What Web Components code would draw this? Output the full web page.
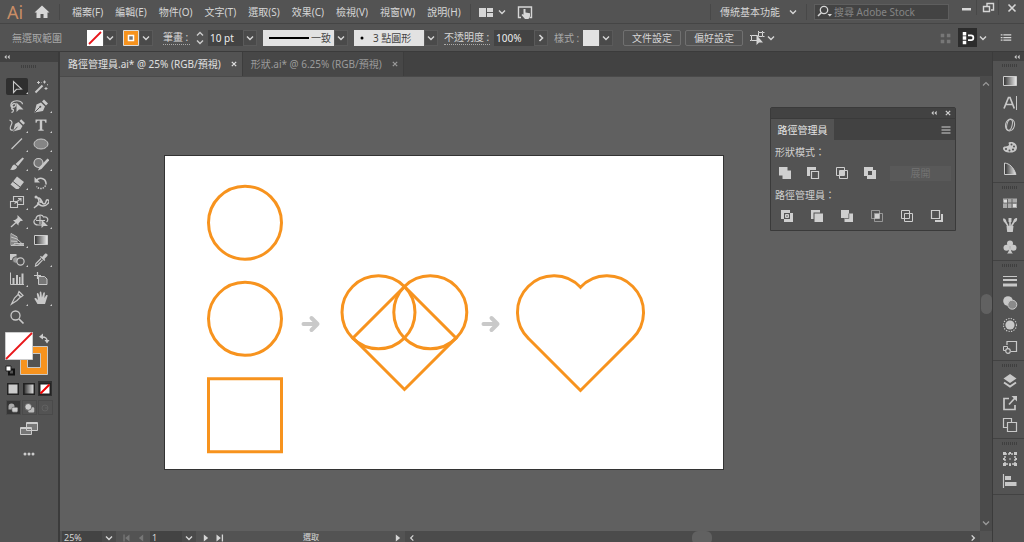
<!DOCTYPE html>
<html lang="zh-Hant">
<head>
<meta charset="utf-8">
<title>路徑管理員.ai</title>
<style>
html,body{margin:0;height:100%;overflow:hidden}
body{font:10px/14px "Noto Sans","Noto Sans CJK TC",sans-serif;color:#d6d6d6;background:#535353;
--bar:#535353;--dark:#424242;--line:#3b3b3b;--canvas:#606060;--scroll:#4b4b4b}
</style>
</head>
<body>
<ai-app></ai-app>
<script>
const RESET=`*{box-sizing:border-box}
button,input,select{font:inherit;color:inherit;background:none;border:0;margin:0;padding:0;border-radius:0;outline:0;appearance:none}
button{display:inline-flex;align-items:center;justify-content:center;flex:none}
svg{display:block;flex:none}`;

function define(name,html,setup){
  const tpl=document.createElement('template');
  tpl.innerHTML=html;
  customElements.define(name,class extends HTMLElement{
    connectedCallback(){
      if(this.shadowRoot)return;
      this.attachShadow({mode:'open'}).append(tpl.content.cloneNode(true));
      if(setup)setup.call(this,this.shadowRoot);
    }
  });
}

/* Icons on a 16 x 16 grid, drawn in the current text colour. */
const S='fill="none" stroke="currentColor"';
const ramp=(id,d)=>`<defs><linearGradient id="${id}"><stop offset="0" stop-color="#2e2e2e"/><stop offset="1" stop-color="#eee"/></linearGradient></defs>${d}`;
const ICONS={
chev:`<path d="M5 6.5l3 3 3-3" ${S} stroke-width="1.4"/>`,
right:`<path d="M6.5 5l3 3-3 3" ${S} stroke-width="1.6"/>`,
left:`<path d="M9.5 5l-3 3 3 3" ${S} stroke-width="1.4"/>`,
up:`<path d="M5 9.5l3-3 3 3" ${S} stroke-width="1.2"/>`,
dbl:`<path d="M7.500 5.500v5l-2.500-2.500zM11 5.500v5l-2.500-2.500z" fill="currentColor"/>`,
close:`<path d="M5.500 5.500l5 5m0-5l-5 5" ${S} stroke-width="1.4"/>`,
home:`<path d="M8 1.500L15.500 8.500h-2V14H9.500v-4h-3v4h-4V8.500h-2z" fill="currentColor"/>`,
layout:`<path d="M1 4h7v9H1zM9 4h6v4H9zM9 9h6v4H9z" fill="currentColor"/>`,
touch:`<path d="M4 13.500H1.500V3h13v10.500H12.500" ${S} stroke-width="1.400"/><path d="M6.500 5h2v3.500l4.500.8v3L11.500 15H8l-3.500-4 1-1 1 .8z" fill="currentColor"/>`,
search:`<circle cx="8" cy="6" r="3.700" ${S} stroke-width="1.300"/><path d="M5.300 8.700L2 12" stroke="currentColor" stroke-width="1.600"/><path d="M11.500 10h4.500l-2.200 2.500z" fill="currentColor"/>`,
min:`<path d="M4 8h9v2.500H4z" fill="currentColor"/>`,
restore:`<path d="M7 6V3.500h6.500V10H11" ${S} stroke-width="1.400"/><path d="M3.500 6.500h6v5h-6z" ${S} stroke-width="1.400"/>`,
x:`<path d="M4.500 4.500l7 7m0-7l-7 7" ${S} stroke-width="1.600"/>`,
select:`<path d="M4.500 2.500v11l3-3.200 5-.3z" ${S} stroke-width="1.100"/>`,
wand:`<path d="M2.500 13.500l7-7" ${S} stroke-width="2"/><path d="M11.500 1.500v3M10 3h3M5.500 2v3M4 3.500h3M13 8v3M11.500 9.500h3M8.500 3.500l.5.500M14 5.500l1 .5" ${S}/>`,
lasso:`<path d="M4 10C1 9 1 4.500 5 3.200c4-1.200 8.500.3 8.500 3M4 10c-2 0-1.500 2 .3 1.500C5 14 3 14.500 2.500 14M7 6c-2-1-4 0-4 2 1 2 4 1 4-2z" ${S} stroke-width="1.200"/><path d="M7.500 4.500v9.500l2.500-2.500h4.500z" fill="currentColor"/>`,
pen:`<path d="M1.500 14.500l2-8 4.500-2 4 4-2 4.500zM9 3.500L11 1.500l4 4-2 2z" fill="currentColor"/><path d="M2 14l4.800-4.800" stroke="#535353"/><circle cx="7.300" cy="8.700" r="1" fill="#535353"/>`,
curve:`<path d="M.5 3c3 1 3 3 1.500 5.500S1 14 4 13" ${S} stroke-width="1.200"/><path d="M4 14.500l2-7.500 3.500-2 4 4-2 3.500zM10.500 4l1.700-1.700L16 6l-1.700 1.700z" fill="currentColor"/><path d="M4.500 14l4-4.300" stroke="#535353"/>`,
type:`<path d="M2.500 2.500h11v3.300h-1.200c-.2-1.500-.6-2-2-2H9.200v8c0 .8.300 1 1.500 1v.9H5.300v-.9c1.200 0 1.500-.2 1.500-1v-8H5.700c-1.400 0-1.800.5-2 2H2.500z" fill="currentColor"/>`,
line:`<path d="M2.500 13L13 2.500" ${S} stroke-width="1.200"/>`,
ellipse:`<ellipse cx="8" cy="8" rx="7" ry="5" fill="#858585" stroke="currentColor"/>`,
brush:`<path d="M13.500 1.500l1.500 1-6 7.500-2.500-2z" fill="currentColor"/><path d="M5.500 8.500l2.500 2c0 3-4 4-7 3 2-.8 1.500-4.500 4.500-5z" fill="currentColor"/>`,
shaper:`<circle cx="5.500" cy="7" r="4.500" fill="#777" stroke="currentColor" stroke-width="1.200"/><path d="M14.500 2.500l2 1.500-8 9L5 14.500l1.500-3.500z" fill="currentColor"/>`,
eraser:`<path d="M8 1.500L15 7l-5.500 7H7L1.500 9.500z" fill="currentColor"/><path d="M4 6.500l7 5.500" stroke="#535353"/>`,
rotate:`<path d="M3.500 5.500A5.300 5.300 0 0 1 13 8" ${S} stroke-width="1.500"/><path d="M13 8a5.300 5.300 0 0 1-9.500 3.500" ${S} stroke-width="1.500" stroke-dasharray="1.500 1"/><path d="M1.500 2v5.500H7z" fill="currentColor"/>`,
scale:`<path d="M1.500 7.500h7v6h-7zM4.500 7V2.500h10v8H9M5.500 9.500L12 4.500M9 4.500h3v3" ${S} stroke-width="1.100"/>`,
width:`<path d="M2 3c3 0 4 2 4 5s-3 4-5 6M5 4c4-1 3 6 6 6s1-5 4-4-1 6-5 6-4-3-6-3" ${S} stroke-width="1.500"/><circle cx="3" cy="3" r="1.500" fill="currentColor"/><circle cx="8" cy="7.500" r="1.500" fill="currentColor"/>`,
pin:`<path d="M8.500 2l5.500 5.500-1.500.5h-1l-2 2.500v2L4 7h2l2.500-2z" fill="currentColor"/><path d="M2 14l5-4.500" stroke="currentColor" stroke-width="1.300"/>`,
build:`<path d="M9 12H5C0 12 0 7 3 6c0-4 6-5 7.500-2 4-1 5.500 3 3 5M3 7.500h9M7 3v8" ${S} stroke-width="1.200"/><path d="M8.500 6.500V15l2.200-2h4.300z" fill="currentColor"/>`,
persp:`<path d="M2 1.500v12M2 1.500l6 3.300v6.700l-6 2M4 2.800v10M6 4v8M2 5l6 2M2 9l6 .5M8 11.500h7M2 13.500h13M8 7l7 6.500M5 11.500L15 13" ${S} stroke-width=".9"/>`,
grad:ramp('g1',`<path d="M1.500 3.500h13v9h-13z" fill="url(#g1)" stroke="#ccc"/>`),
blend:`<path d="M1 2h6.500v6H1z" fill="currentColor"/><circle cx="6.800" cy="8" r="3.300" fill="#999" stroke="#535353"/><circle cx="11.500" cy="9.500" r="3.600" fill="#535353" stroke="currentColor" stroke-width="1.200"/>`,
dropper:`<path d="M9 5l2.800-3c1.500-1.500 3.800.8 2.300 2.300L11.500 7l.8 1-1 1L7 4.800l1-1z" fill="currentColor"/><path d="M8 6.500l-5 5L2.500 14l2-.8 5-5" ${S} stroke-width="1.200"/>`,
graph:`<path d="M1.500 1.500v12H15" ${S}/><path d="M3.500 7h2v6h-2zM7 4h2v9H7zM10 6h1.500v7H10zM12.500 2.500h2V13h-2z" fill="currentColor"/>`,
board:`<path d="M1 4.500h7M4.500 1v7" ${S} stroke-width="1.200"/><path d="M5.500 5.500h6l2.500 2.500v5.500h-8.500z" fill="#777" stroke="currentColor"/>`,
slice:`<path d="M10 1.500l4 4-2 1.500-3-3zM9 4.500L11.500 7 8 10.500 2.500 14l3-6z" ${S} stroke-width="1.200"/>`,
hand:`<path d="M4.500 14L1.500 9c-.3-1 1-1.500 1.700-.7L5 10 3.800 4c0-1.200 1.400-1.300 1.700-.2L7 7.500l-.3-5c.1-1.200 1.500-1.200 1.700 0l.5 5L10.300 3c.3-1.200 1.700-.9 1.600.3L11.300 8l1.700-2.500c.7-1 2-.3 1.500.8L12 14z" fill="currentColor"/>`,
zoom:`<circle cx="6.500" cy="6.500" r="4.500" ${S} stroke-width="1.300"/><path d="M10 10l4.500 4.500" ${S} stroke-width="1.700"/>`,
unite:`<path d="M2 2h8.500v3.500H14V14H5.500v-3.500H2z" fill="currentColor"/>`,
minus:`<path d="M2 2h9v3H5v6H2z" fill="currentColor"/><path d="M6.500 6.500h7v7h-7z" ${S} stroke-width="1.200"/>`,
inter:`<path d="M2.500 2.500h8v8h-8zM5.500 5.500h8v8h-8z" ${S}/><path d="M6 6h4v4H6z" fill="currentColor"/>`,
exclude:`<path fill-rule="evenodd" d="M2 2h9v3h3v9H5v-3H2zM6 6h4v4H6z" fill="currentColor"/>`,
divide:`<path d="M2 2h9v3H5v6H2zM14 14H5v-3h6V5h3z" fill="currentColor"/><path d="M6.500 6.500h3v3h-3z" fill="#999" stroke="currentColor"/>`,
trim:`<path d="M2 2h9v2.500H4.500V11H2zM5.500 5.500H14V14H5.500z" fill="currentColor"/>`,
merge:`<path d="M2 2h8v3.500h4V14H5.500v-4H2z" fill="currentColor"/><path d="M5.500 10.500H9.800V5.500" fill="none" stroke="#535353" stroke-width=".7"/>`,
crop:`<path d="M2.500 2.500h8v8h-8zM5.500 5.500h8v8h-8z" ${S} stroke-opacity=".7" stroke-width=".8"/><path d="M6 6h4.500v4.500H6z" fill="currentColor"/>`,
outline:`<path d="M2.500 2.500h8v8h-8zM5.500 5.500h8v8h-8z" ${S}/>`,
back:`<path d="M2.500 2.500h8v8h-8z" ${S} stroke-width="1.200"/><path d="M12 6h2v8H6v-2h6z" fill="currentColor"/>`,
char:`<path d="M2 13.500L6.500 2.500h1.500l4.300 11M3.800 9.500h6.900" ${S} stroke-width="1.700"/><path d="M14.500 1v14" stroke="currentColor"/>`,
opentype:`<ellipse cx="8" cy="8" rx="4.500" ry="6" ${S} transform="rotate(14 8 8)"/><ellipse cx="7.500" cy="8" rx="2.600" ry="5.500" ${S} transform="rotate(14 8 8)"/>`,
palette:`<path d="M8 3c8-1 10 10 1 10.500C5 14 1 12 1 9.500c0-3 5-1.500 6-3.500C7.500 5 5 3.500 8 3z" fill="currentColor"/><g fill="#535353"><circle cx="4" cy="10" r="1.100"/><circle cx="7.500" cy="11.500" r="1"/><circle cx="11" cy="10.500" r="1.100"/><circle cx="12" cy="7.500" r="1"/><circle cx="9.500" cy="5.500" r="1"/></g>`,
guide:ramp('g2',`<path d="M2.500 2c5 .5 9 4 11.500 11.500H2.500z" fill="url(#g2)" stroke="#ccc"/>`),
swatch:`<path d="M1 3.500h14v9.500H1z" fill="#aaa"/><path d="M5.500 4v9M10 4v9M1 8h14" stroke="#666"/><path d="M2 5h3v2.500H2zM11 9h3v3h-3z" fill="#ddd"/>`,
brushes:`<path d="M4.500 9h7l-.7 6H5.200z" fill="currentColor"/><path d="M6 9L3.500 5M8 9V4M9.500 9l3-5" ${S} stroke-width="1.600"/><path d="M1 1.500c3 0 3.500 2 3.500 5C2 6 1 4 1 1.500zM6.500 1h3v4h-3zM11.500 5c0-3 1-4 3.500-4 .5 2-.5 5-3.500 4z" fill="currentColor"/>`,
club:`<circle cx="8" cy="4.500" r="3" fill="currentColor"/><circle cx="4.500" cy="8.800" r="3" fill="currentColor"/><circle cx="11.500" cy="8.800" r="3" fill="currentColor"/><path d="M7.300 6h1.400c0 5 .5 7 2.300 8.500H5C6.800 13 7.300 11 7.300 6z" fill="currentColor"/>`,
stroke:`<path d="M1 3h14v1H1zM1 6h14v2H1zM1 10.500h14v3H1z" fill="currentColor"/>`,
trans:`<circle cx="6" cy="6" r="4.800" fill="currentColor"/><circle cx="10.300" cy="9.700" r="4.500" fill="#8a8a8a" stroke="currentColor"/>`,
appear:`<circle cx="8" cy="8" r="4.600" fill="currentColor"/><circle cx="8" cy="8" r="6.500" ${S} stroke-width="1.100" stroke-dasharray="1.300 1.250"/>`,
gstyle:`<path d="M5 6V2.500h9.500v10H9" ${S} stroke-width="1.200"/><path d="M1.500 7.500h4v4h-4z" ${S}/><circle cx="6" cy="12" r="2.300" fill="#535353" stroke="currentColor" stroke-width="1.200"/>`,
layers:`<path d="M8 1l6.500 4.500L8 10 1.500 5.500z" fill="currentColor"/><path d="M2 9.500L8 13.500l6-4" ${S} stroke-width="1.900"/>`,
export:`<path d="M7 3.500H2v11h11V10" ${S} stroke-width="1.700"/><path d="M9.500 1H15v5.500z" fill="currentColor"/><path d="M7 9.500L13 3" stroke="currentColor" stroke-width="1.700"/>`,
boards:`<path d="M5.500 10.500h-4v-9h8v4M5.500 5.500h9v9h-9z" ${S} stroke-width="1.200"/>`,
transform:`<path d="M3 3h10v10H3z" ${S} stroke-width="1.500" stroke-dasharray="2 1"/><path d="M1 1h3v3H1zM12 1h3v3h-3zM1 12h3v3H1zM12 12h3v3h-3zM7 1h2v2H7zM7 13h2v2H7zM1 7h2v2H1zM13 7h2v2h-2zM7 7.500h2v1H7z" fill="currentColor"/>`,
align:`<path d="M1.500 1v14" stroke="currentColor" stroke-width="1.200"/><path d="M3 3h6v4H3zM3 9h11.500v4H3z" fill="currentColor"/>`,
isolate:`<path d="M2.500 5.500h6v5h-6zM9.500 2.500h4v4h-4zM1 5.500h1M1 10.500h1M9.500 1v1M13.500 1v1M14 6.500h1.500M14 2.500h1.500" ${S}/><path d="M7.500 5v10l2.500-2.500h4z" fill="currentColor"/>`,
dots4:`<path d="M2 3h4v4H2zM9 3h4v4H9zM2 10h4v4H2zM9 10h4v4H9z" fill="currentColor"/>`,
snap:`<path d="M2 1h4v4H2zM2 6h4v4H2zM2 11h4v4H2z" fill="currentColor"/><path d="M8 5h3.500c3.500 0 3.500 5.500 0 5.500H8" ${S} stroke-width="2"/>`,
list:`<path d="M5 4.500h9M5 7.500h9M5 10.500h9M2 4.500h2M2 7.500h2M2 10.500h2" ${S} stroke-width="1.300"/>`,
menu:`<path d="M3.500 5h9M3.500 8h9M3.500 11h9" ${S} stroke-width="1.100"/>`,
play:`<path d="M5.500 4l5 4-5 4z" fill="currentColor"/>`,
prev:`<path d="M10.500 4l-5 4 5 4z" fill="currentColor"/>`,
first:`<path d="M12 4l-5 4 5 4zM5 4h1.500v8H5z" fill="currentColor"/>`,
last:`<path d="M4 4l5 4-5 4zM10 4h1.500v8H10z" fill="currentColor"/>`,
drawn:`<path d="M2 6a4 4 0 1 1 8 0v4H2z" fill="#aaa"/><rect x="6.500" y="7" width="8" height="6.500" rx="1.500" fill="#ccc" stroke="#444" stroke-width=".7"/>`,
drawb:`<rect x="7" y="7" width="8" height="7" rx="1.500" fill="#bbb"/><circle cx="7" cy="6.500" r="4.500" fill="#ccc" stroke="#555"/>`,
drawi:`<circle cx="8" cy="8" r="4" ${S}/><path d="M8 8h4" ${S}/>`,
flat:`<path d="M1 1h14v14H1z" fill="#ccc" stroke="#222" stroke-width="2"/>`,
gradm:ramp('g3',`<path d="M1 1h14v14H1z" fill="url(#g3)" stroke="#222" stroke-width="2"/>`),
none:`<path d="M1 1h14v14H1z" fill="#fff" stroke="#222" stroke-width="2"/><path d="M2 14L14 2" stroke="#e00" stroke-width="2.500"/>`
};
customElements.define('ai-icon',class extends HTMLElement{
  connectedCallback(){
    if(this.shadowRoot)return;
    const s=this.getAttribute('size')||16;
    this.attachShadow({mode:'open'}).innerHTML=`<style>:host{display:block;flex:none}svg{display:block}</style><svg width="${s}" height="${s}" viewBox="0 0 16 16" aria-hidden="true">${ICONS[this.getAttribute('name')]}</svg>`;
  }
});

define('ai-menu-bar',`<style>${RESET}
:host{display:flex;align-items:center;height:24px;background:var(--bar);border-bottom:1px solid #454545;flex:none}
.logo{font:18px/22px "Noto Sans",sans-serif;color:#c98d66;margin-left:7px;width:27px}
i{width:1px;height:16px;background:#484848}
nav{display:flex;padding:0 3px 0 6px}nav button{padding:0 6px}
.ic{margin-left:7px}.sp{flex:1}
.ws{gap:5px;margin:0 5px 0 9px}
label{display:flex;align-items:center;width:135px;height:16px;margin:0 6px 0 7px;background:#434343;border:1px solid #5e5e5e;padding-left:1px}
input{width:100px;margin-left:2px;color:#999;height:14px}input::placeholder{color:#858585;opacity:1}
.win{display:flex;align-self:flex-start;height:15px}.win button{width:22px;height:15px;border-right:1px solid #484848}.win button:last-child{width:25px;border:0}
</style>
<span class="logo">Ai</span><button aria-label="首頁"><ai-icon name="home"></ai-icon></button><i style="margin-left:9px"></i>
<nav></nav><i></i>
<button class="ic" aria-label="排列文件"><ai-icon name="layout"></ai-icon><ai-icon name="chev"></ai-icon></button>
<button class="ic" aria-label="觸控工作區"><ai-icon name="touch"></ai-icon></button>
<span class="sp"></span><i></i>
<button class="ws">傳統基本功能<ai-icon name="chev"></ai-icon></button><i></i>
<label><ai-icon name="search"></ai-icon><input type="search" placeholder="搜尋 Adobe Stock" aria-label="搜尋 Adobe Stock"></label>
<div class="win"><button aria-label="最小化"><ai-icon name="min"></ai-icon></button><button aria-label="還原"><ai-icon name="restore"></ai-icon></button><button aria-label="關閉"><ai-icon name="x"></ai-icon></button></div>`,
r=>{r.querySelector('nav').innerHTML='檔案(F),編輯(E),物件(O),文字(T),選取(S),效果(C),檢視(V),視窗(W),說明(H)'.split(',').map(t=>`<button>${t}</button>`).join('')});

define('ai-control-bar',`<style>${RESET}
:host{display:flex;align-items:center;height:28px;background:var(--bar);border-bottom:1px solid var(--line);flex:none;white-space:nowrap;padding-left:12px}
.c{width:14px;height:16px;background:#4a4a4a;border:1px solid #5a5a5a;overflow:hidden}
.g{margin-left:6px}.sw{width:16px;height:16px}
.d{border-bottom:1px dotted #aaa;line-height:13px}
.sel{display:flex;align-items:center;height:16px;background:#e2e2e2;color:#444;padding:0 3px}
select{height:16px;text-overflow:clip}
.in{background:#434343;height:16px;padding:0 2px;color:#eee}
.b{width:58px;height:16px;border:1px solid #707070;border-radius:2px}
.on{width:19px;height:19px;background:#2c2c2c;color:#fff;margin:0 0 0 5px}
</style>
<span style="color:#a8a8a8;width:75px">無選取範圍</span>
<button aria-label="填色" class="sw"><svg width="16" height="16"><path fill="#fff" d="M0 0h16v16H0z"/><path d="M2 14L14 2" stroke="#e8161a" stroke-width="1.800"/></svg></button><button class="c" aria-label="填色選單"><ai-icon name="chev"></ai-icon></button>
<button aria-label="筆畫顏色" class="sw g"><svg width="16" height="16"><path fill="#f7931e" stroke="#ddd" d="M.5.5h15v15H.5z"/><path d="M5.500 5.500h5v5h-5z" fill="#777" stroke="#fff" stroke-width="1.500"/></svg></button><button class="c" aria-label="筆畫選單"><ai-icon name="chev"></ai-icon></button>
<label for="w" class="d" style="margin-left:10px;width:27px">筆畫 :</label>
<button aria-label="增減寬度" style="margin:0 2px 0 4px;width:12px;height:16px"><svg width="10" height="16" fill="none" stroke="#ccc" stroke-width="1.400"><path d="M2 5.500l3-3 3 3M2 10.500l3 3 3-3"/></svg></button>
<input id="w" class="in" value="10 pt" style="width:35px"><button class="c" aria-label="寬度選單"><ai-icon name="chev"></ai-icon></button>
<label class="sel g"><svg width="45" height="16"><path d="M3 8h40" stroke="#000" stroke-width="2"/></svg><select aria-label="變數寬度描述檔" style="width:20px"><option>一致</option></select></label><button class="c" aria-label="描述檔選單"><ai-icon name="chev"></ai-icon></button>
<label class="sel g"><svg width="16" height="16"><circle cx="5" cy="8" r="1.500"/></svg><select aria-label="筆刷定義" style="width:48px"><option>3 點圓形</option></select></label><button class="c" aria-label="筆刷選單"><ai-icon name="chev"></ai-icon></button>
<label for="o" class="d" style="margin:0 4px 0 6px;width:46px">不透明度 :</label>
<input id="o" class="in" value="100%" style="width:40px"><button class="c" aria-label="不透明度選項"><ai-icon name="right"></ai-icon></button>
<span class="g" style="color:#aaa;width:29px">樣式 :</span>
<button aria-label="圖形樣式" class="sw" style="background:#e2e2e2"></button><button class="c" aria-label="樣式選單"><ai-icon name="chev"></ai-icon></button>
<button class="b" style="margin-left:10px">文件設定</button><button class="b" style="margin:0 6px 0 4px">偏好設定</button>
<button aria-label="選取類似物件"><ai-icon name="isolate"></ai-icon><ai-icon name="chev" style="margin-left:-2px"></ai-icon></button>
<span style="flex:1"></span>
<button aria-label="對齊格點" style="color:#777"><ai-icon name="dots4" size="14"></ai-icon></button>
<button class="on" aria-label="靠齊"><ai-icon name="snap" size="14"></ai-icon></button><button aria-label="靠齊選單" style="width:12px;margin-right:10px"><ai-icon name="chev"></ai-icon></button>
<button aria-label="控制列選單" style="margin-right:11px"><ai-icon name="list" size="14"></ai-icon></button>`);

define('ai-toolbar',`<style>${RESET}
:host{display:flex;flex-direction:column;align-items:center;width:60px;flex:none;background:var(--bar);border-right:2px solid var(--line);color:#c8c8c8}
header{align-self:stretch;height:10px;background:var(--dark);display:flex;align-items:center;flex:none}
.grip{width:16px;height:3px;margin:3px 0 9px;background:repeating-linear-gradient(90deg,#3f3f3f 0 1px,#535353 1px 2px)}
.t{display:grid;grid-template-columns:24px 24px;grid-auto-rows:1fr;height:250px}
.t button{position:relative;margin:1px}.t button.on{background:#2f2f2f;border-radius:2px}
.t .m::after{content:"";position:absolute;right:0;bottom:1px;border:solid;border-color:transparent #ccc #ccc transparent;border-width:1px}
.fs{margin:5px 0 5px}
.row{display:flex;gap:2px;height:15px}.row button{width:14px}.row .on{background:#303030}
.two{margin:4px 0 6px;color:#666;gap:1px}.two .on{background:#353535}.two button{border:1px solid #4a4a4a;width:15px}
</style>
<header><ai-icon name="dbl" size="14"></ai-icon></header><div class="grip"></div>
<div class="t"></div>
<button class="fs" aria-label="填色與筆畫"><svg width="48" height="44"><path fill-rule="evenodd" d="M15.500 14.500h27v28h-27zM22.500 21.500h13v14h-13z" fill="#f7931e" stroke="#c8c8c8"/><path d="M.5.500h27v27H.5z" fill="#fff" stroke="#ccc"/><path d="M1 27L27 1" stroke="#e8161a" stroke-width="1.800"/><path d="M37 5c4 0 5 1 5 4" fill="none" stroke="#ccc" stroke-width="1.500"/><path d="M38 1.500v6L34 4.700zM39.500 8h5L42 11.500z" fill="#ccc"/><path d="M4 37.500h5v5H4z" fill="#535353" stroke="#111" stroke-width="2"/><path d="M1 34h5v5H1z" fill="#fff" stroke="#222"/></svg></button>
<div class="row"><button aria-label="顏色"><ai-icon name="flat" size="12"></ai-icon></button><button aria-label="漸層"><ai-icon name="gradm" size="12"></ai-icon></button><button class="on" aria-label="無"><ai-icon name="none" size="12"></ai-icon></button></div>
<div class="row two"><button class="on" aria-label="一般繪製"><ai-icon name="drawn" size="12"></ai-icon></button><button aria-label="繪製下層"><ai-icon name="drawb" size="12"></ai-icon></button><button aria-label="繪製內側"><ai-icon name="drawi" size="12"></ai-icon></button></div>
<button aria-label="變更螢幕模式"><svg width="20" height="16" fill="#777" stroke="#ccc"><path d="M7.500 1.500h11v8h-11zM1.500 6.500h11v7h-11z"/><path d="M7.500 2.500h11M1.500 7.500h11"/></svg></button>
<button aria-label="編輯工具列" style="margin-top:14px"><svg width="14" height="6" fill="#ccc"><circle cx="3" cy="3" r="1.500"/><circle cx="7" cy="3" r="1.500"/><circle cx="11" cy="3" r="1.500"/></svg></button>`,
r=>{
  const tools='select wand lasso pen curve type line ellipse brush shaper eraser rotate scale width pin build persp grad blend dropper graph board slice hand zoom'.split(' ');
  const plain=['wand','lasso','grad','board','zoom'];
  r.querySelector('.t').innerHTML=tools.map((n,i)=>`<button aria-label="${n}" class="${i?'':'on'} ${plain.includes(n)?'':'m'}"><ai-icon name="${n}"></ai-icon></button>`).join('');
});

define('ai-dock',`<style>${RESET}
:host{display:block;width:32px;flex:none;background:var(--bar);border-left:1px solid var(--line);color:#c8c8c8}
header{height:9px;background:var(--dark);display:flex;align-items:center;justify-content:flex-end}
section{display:flex;flex-direction:column;align-items:center;border-bottom:1px solid #424242;padding:0 0 2px 2px}
section::before{content:"";width:16px;height:3px;margin:3px 0 3px;background:repeating-linear-gradient(90deg,#3f3f3f 0 1px,#535353 1px 2px)}
section button{height:22px;width:28px}
</style><header><ai-icon name="dbl" size="14"></ai-icon></header><main></main>`,
r=>{
  r.querySelector('main').innerHTML=['grad char opentype palette guide','swatch brushes club','stroke trans appear gstyle','layers export boards','transform align']
   .map(g=>`<section>${g.split(' ').map(n=>`<button aria-label="${n}"><ai-icon name="${n}"></ai-icon></button>`).join('')}</section>`).join('');
});

define('ai-tab',`<style>${RESET}
:host{display:flex;align-items:center;height:24px;padding:0 1px 0 8px;gap:6px;color:#9b9b9b;background:#474747;border-right:1px solid #3d3d3d;white-space:nowrap}
:host([active]){background:var(--bar);color:#e0e0e0}
</style><slot></slot><button aria-label="關閉"><ai-icon name="close" size="14"></ai-icon></button>`);

define('ai-artboard',`<style>
:host{display:block;background:#fff;border:1px solid #333}svg{display:block}
</style><svg width="558" height="313" viewBox="165 156 558 313" fill="none" stroke="#f7931e" stroke-width="3">
<circle cx="245" cy="222.700" r="36.500"/><circle cx="245" cy="318.800" r="36.500"/><path d="M208.500 378.700h73v73h-73z"/>
<circle cx="378.500" cy="312.300" r="36.500"/><circle cx="430.300" cy="312.300" r="36.500"/><path d="M404.500 286.500L456 338l-51.500 51.500L353 338z"/>
<path d="M580.500 390.500l-51.700-51.700a36.500 36.500 0 1 1 51.700-51.500a36.500 36.500 0 1 1 51.700 51.500z"/>
<g stroke="#c9c9c9" stroke-width="4" stroke-linecap="round" stroke-linejoin="round"><path d="M303.500 324h14M311.500 318l6 6-6 6"/><path d="M483.500 324h14M491.500 318l6 6-6 6"/></g>
</svg>`);

define('ai-pathfinder',`<style>${RESET}
:host{display:block;width:186px;background:var(--bar);border:1px solid #3a3a3a;border-radius:2px 2px 0 0;color:#cfcfcf}
header{height:10px;background:var(--dark);display:flex;align-items:center;justify-content:flex-end}
.tabs{display:flex;justify-content:space-between;height:22px;background:var(--dark);border-top:1px solid #3a3a3a}
.tabs button:first-child{background:var(--bar);width:63px;color:#e4e4e4}.tabs button:last-child{width:18px}
h3{font:inherit;margin:0 0 0 4px}h3.a{margin-top:5px}
.r{display:flex;align-items:center}.m{height:16px;margin:6px 4px 7px 6px;justify-content:space-between}
.f{margin:6px 0 6px 8px;gap:14px}
.e{width:61px;height:15px;background:#595959;color:#737373}
</style>
<header><ai-icon name="dbl" size="14"></ai-icon><ai-icon name="close" size="14"></ai-icon></header>
<div class="tabs"><button>路徑管理員</button><button aria-label="面板選單"><ai-icon name="menu"></ai-icon></button></div>
<h3 class="a">形狀模式：</h3>
<div class="r m"><button aria-label="聯集"><ai-icon name="unite"></ai-icon></button><button aria-label="減去上層"><ai-icon name="minus"></ai-icon></button><button aria-label="交集"><ai-icon name="inter"></ai-icon></button><button aria-label="差集"><ai-icon name="exclude"></ai-icon></button><button class="e" disabled>展開</button></div>
<h3>路徑管理員：</h3>
<div class="r f"><button aria-label="分割"><ai-icon name="divide"></ai-icon></button><button aria-label="剪裁覆蓋範圍"><ai-icon name="trim"></ai-icon></button><button aria-label="合併"><ai-icon name="merge"></ai-icon></button><button aria-label="裁切"><ai-icon name="crop"></ai-icon></button><button aria-label="外框"><ai-icon name="outline"></ai-icon></button><button aria-label="依後置物件剪裁"><ai-icon name="back"></ai-icon></button></div>`);

define('ai-status',`<style>${RESET}
:host{display:flex;align-items:flex-start;height:11px;overflow:hidden;background:var(--bar);flex:none;font-size:9px;line-height:14px;padding-left:2px}
button,input{height:14px}
input{background:#434343;padding:0 2px}
.c{width:14px;background:#4a4a4a}
.s{flex:1;display:flex;justify-content:space-between;background:var(--scroll);height:14px}
.s b{width:20px;height:14px;border-radius:6px;background:#616161;margin-left:18px}
.st{width:164px;text-align:center;font-size:8px;line-height:12px;padding-left:4px}
</style>
<input aria-label="縮放" value="25%" style="width:40px"><button class="c" aria-label="縮放選單"><ai-icon name="chev"></ai-icon></button>
<button aria-label="第一個" style="color:#777;margin-left:3px"><ai-icon name="first" size="14"></ai-icon></button><button aria-label="上一個" style="color:#777;margin:0 2px 0 1px"><ai-icon name="prev" size="14"></ai-icon></button>
<input aria-label="工作區域" value="1" style="width:32px"><button class="c" aria-label="工作區域選單"><ai-icon name="chev"></ai-icon></button>
<button aria-label="下一個" style="margin-left:3px"><ai-icon name="play" size="14"></ai-icon></button><button aria-label="最後一個"><ai-icon name="last" size="14"></ai-icon></button>
<span class="st">選取</span><button aria-label="狀態選單"><ai-icon name="play" size="14"></ai-icon></button>
<div class="s"><button aria-label="向左捲動"><ai-icon name="left" size="14"></ai-icon></button><b></b><button aria-label="向右捲動"><ai-icon name="right" size="14"></ai-icon></button></div>
<span style="width:12px"></span>`);

define('ai-app',`<style>${RESET}
:host{display:flex;flex-direction:column;height:100vh}
.work{display:flex;flex:1;min-height:0}
.doc{display:flex;flex-direction:column;flex:1;min-width:0}
.tabs{display:flex;height:24px;background:var(--dark);flex:none}
.view{display:flex;flex:1;min-height:0}
.canvas{position:relative;flex:1;background:var(--canvas);overflow:hidden;border-top:1px solid #4a4a4a}
ai-artboard{position:absolute;left:104px;top:78px}
ai-pathfinder{position:absolute;right:24px;top:30px}
.v{display:flex;flex-direction:column;align-items:center;justify-content:space-between;width:12px;background:var(--scroll);color:#999;flex:none}
.v b{width:11px;height:20px;border-radius:6px;background:#616161}
</style>
<ai-menu-bar></ai-menu-bar><ai-control-bar></ai-control-bar>
<div class="work"><ai-toolbar></ai-toolbar>
<div class="doc"><div class="tabs"><ai-tab active>路徑管理員.ai* @ 25% (RGB/預視)</ai-tab><ai-tab>形狀.ai* @ 6.25% (RGB/預視)</ai-tab></div>
<div class="view"><div class="canvas"><ai-artboard></ai-artboard><ai-pathfinder></ai-pathfinder></div>
<div class="v"><button aria-label="向上捲動"><ai-icon name="up"></ai-icon></button><b></b><button aria-label="向下捲動"><ai-icon name="chev"></ai-icon></button></div></div>
<ai-status></ai-status></div>
<ai-dock></ai-dock></div>`);
</script>
</body>
</html>
